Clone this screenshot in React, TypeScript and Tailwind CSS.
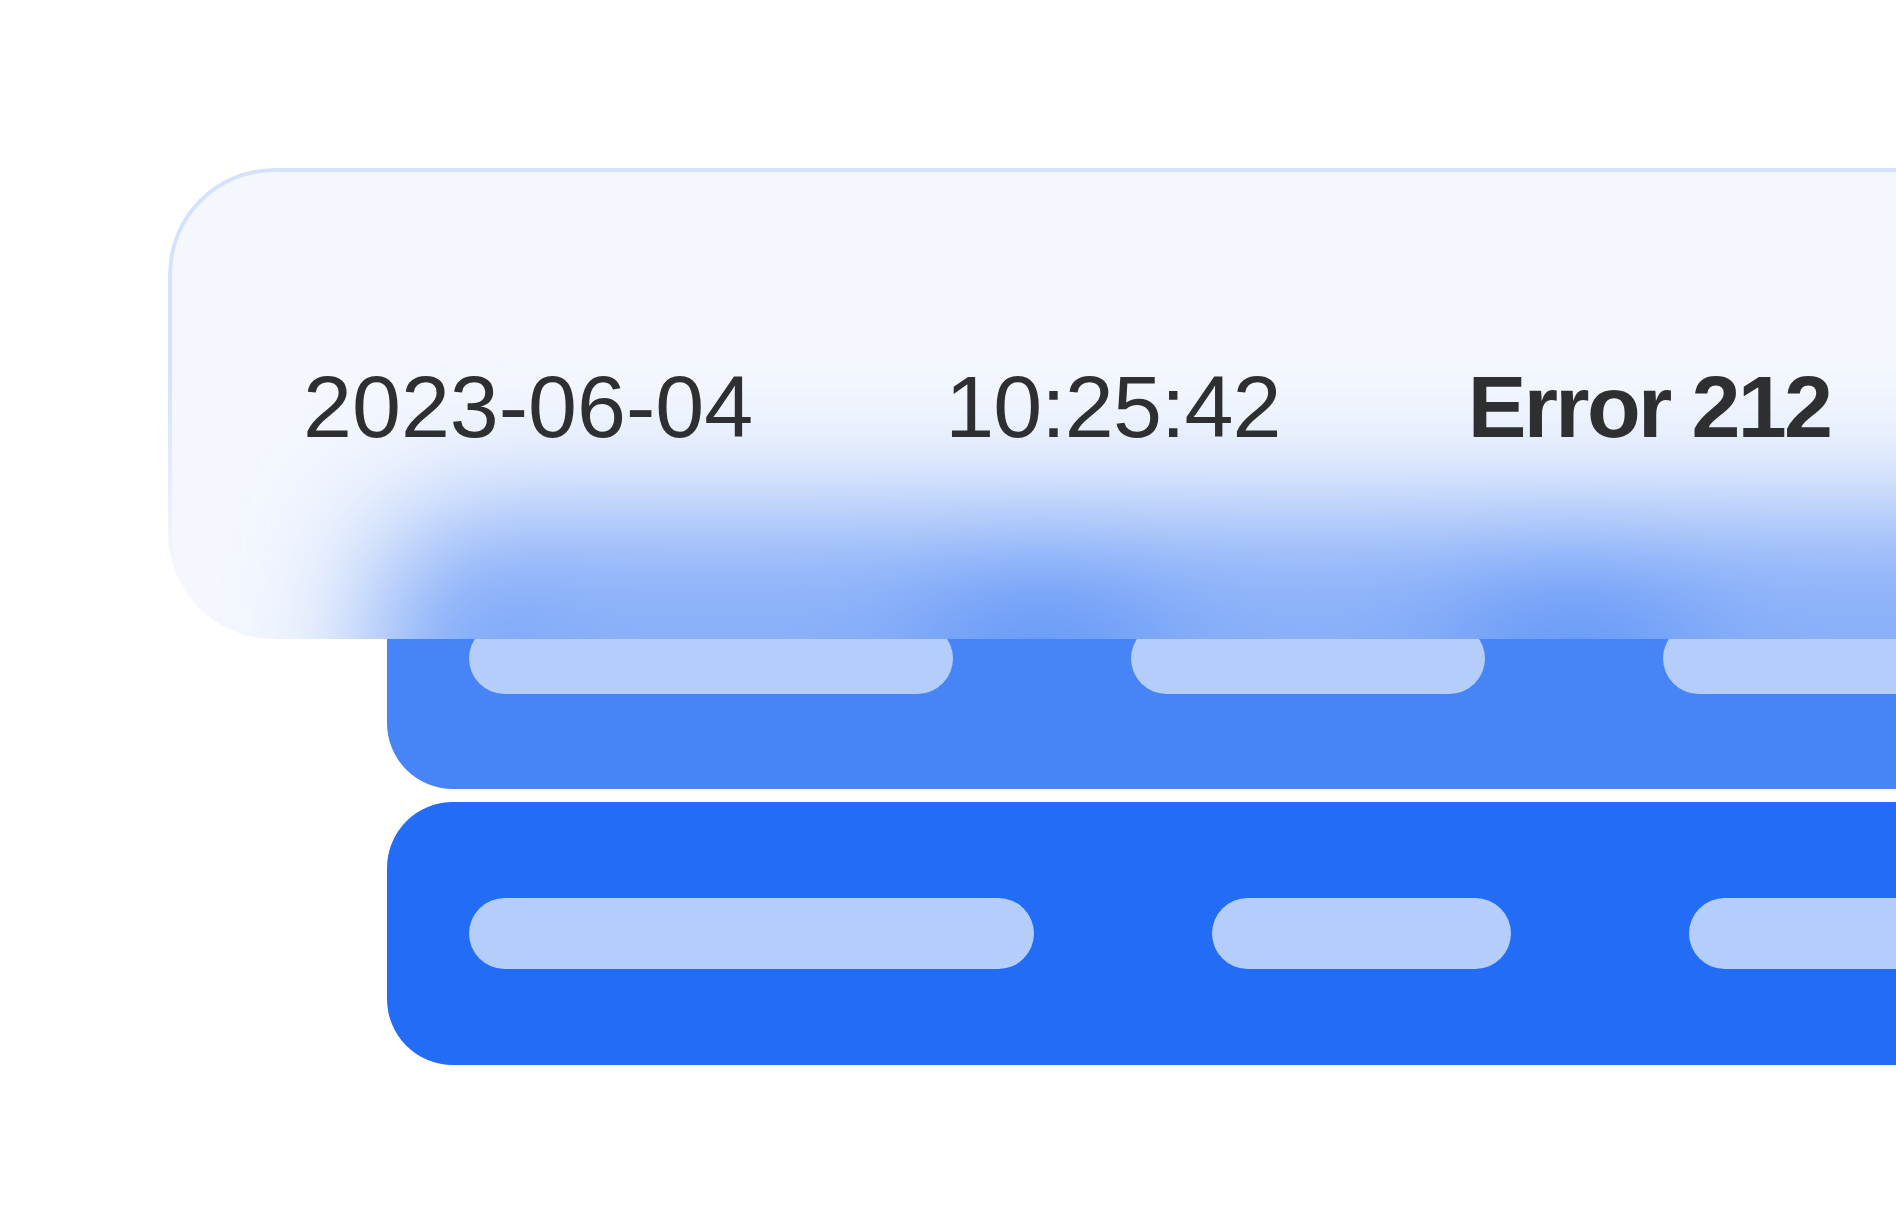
const middlePills = [484, 354, 400];
const bottomPills = [565, 299, 400];

function Pill({ width }: { width: number }) {
  return <div className="h-[71px] shrink-0 rounded-full bg-[#b4cdfa]" style={{ width }} />;
}

function MiddleRow({ className = "" }: { className?: string }) {
  return (
    <div className={`flex h-[262px] w-[1700px] shrink-0 items-center gap-[178px] rounded-l-[66px] bg-[#4785f7] pl-[82px] ${className}`}>
      {middlePills.map((w, i) => (
        <Pill key={i} width={w} />
      ))}
    </div>
  );
}

export default function App() {
  return (
    <div className="h-screen w-screen overflow-hidden bg-white font-['Liberation_Sans',Arial,sans-serif]">
      <div className="flex flex-col pt-[168px]">
        {/* frosted log row: blurred copy of the row below sits under a tint */}
        <div className="relative z-10 ml-[168px] h-[471px] w-[1900px] shrink-0 overflow-hidden rounded-l-[106px] bg-white">
          <div aria-hidden className="absolute left-[219px] top-[359px] blur-[70px]">
            <MiddleRow />
          </div>
          <div className="absolute inset-0 bg-[#c8d7fa]/20" />
          <div className="absolute inset-0 rounded-l-[106px] border-4 border-r-0 border-[#236df6]/15 [mask-image:linear-gradient(to_bottom,#000_45%,transparent_85%)]" />
          <div className="relative flex h-full items-center pl-[135px] pt-[6px] text-[88px] leading-none text-[#2d2f30]">
            <span>2023-06-04</span>
            <span className="ml-[192px] tracking-[-0.01em]">10:25:42</span>
            <span className="ml-[187px] font-bold tracking-[-0.03em]">Error 212</span>
          </div>
        </div>

        <MiddleRow className="-mt-[112px] ml-[387px]" />

        <div className="mt-[13px] ml-[387px] flex h-[263px] w-[1700px] shrink-0 items-center gap-[178px] rounded-l-[66px] bg-[#236df6] pl-[82px]">
          {bottomPills.map((w, i) => (
            <Pill key={i} width={w} />
          ))}
        </div>
      </div>
    </div>
  );
}
